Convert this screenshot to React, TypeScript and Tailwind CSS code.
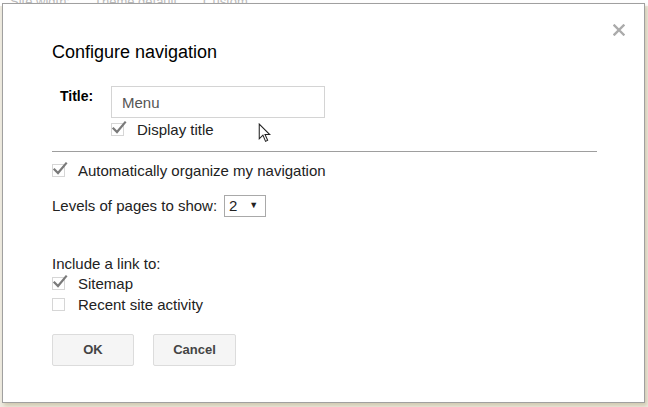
import { useState } from "react";

const Check = ({ checked }: { checked: boolean }) => (
  <span className="relative inline-block w-[13px] h-[13px] border border-[#d6d6d6] bg-white shrink-0">
    {checked && (
      <svg
        viewBox="0 0 16 16"
        className="absolute -left-[1px] -top-[4px] w-[16px] h-[16px]"
      >
        <path
          d="M2.5 8.5 L6 12 L14 2.5"
          fill="none"
          stroke="#7a7a7a"
          strokeWidth="2.2"
          strokeLinecap="square"
        />
      </svg>
    )}
  </span>
);

const CheckRow = ({
  checked,
  label,
  className = "",
}: {
  checked: boolean;
  label: string;
  className?: string;
}) => (
  <label className={`flex items-center gap-[13px] h-[17px] ${className}`}>
    <Check checked={checked} />
    <span className="text-[15px] leading-[17px] text-[#222]">{label}</span>
  </label>
);

export default function App() {
  const [title] = useState("Menu");

  return (
    <div
      className="relative w-[648px] h-[407px] overflow-hidden bg-[#efece2]"
      style={{ fontFamily: '"Liberation Sans", Arial, sans-serif' }}
    >
      {/* faded page behind the dialog */}
      <div className="flex pl-[10px] text-[13px] text-[#bbb] h-[6px] leading-[4px] bg-white">
        <span>Site width:</span>
        <span className="ml-[24px]">Theme default</span>
        <span className="ml-[26px]">Custom</span>
        <span className="ml-[17px]">...</span>
      </div>

      {/* Dialog */}
      <div className="absolute left-[2px] top-[3px] w-[643px] h-[400px] bg-white border border-[#a0a0a0] shadow-[2px_3px_4px_rgba(180,170,130,0.5)]">
        <button className="absolute right-[19px] top-[20px]">
          <svg viewBox="0 0 12 12" className="w-[12px] h-[12px]">
            <path
              d="M1.5 1.5 L10.5 10.5 M10.5 1.5 L1.5 10.5"
              stroke="#ababab"
              strokeWidth="2.4"
              strokeLinecap="square"
            />
          </svg>
        </button>

        {/* mouse pointer */}
        <svg
          viewBox="0 0 12 20"
          className="absolute left-[255px] top-[119px] w-[13px] h-[21px]"
        >
          <path
            d="M1 1 L1 15 L4.5 11.5 L7 17.5 L9 16.5 L6.5 11 L11 11 Z"
            fill="white"
            stroke="#222"
            strokeWidth="1"
          />
        </svg>

        <div className="pl-[49px] pr-[47px] pt-[37px]">
          <h1 className="text-[18px] text-black leading-[22px]">
            Configure navigation
          </h1>

          <div className="flex mt-[23px]">
            <span className="w-[59px] pl-[8px] pt-[2px] text-[14px] leading-[17px] font-bold text-black">
              Title:
            </span>
            <div>
              <input
                defaultValue={title}
                className="block w-[214px] h-[32px] border border-[#d4d4d4] px-[10px] text-[15px] text-[#555] outline-none"
                style={{ fontFamily: '"Liberation Sans", Arial, sans-serif' }}
              />
              <CheckRow checked label="Display title" className="mt-[3px]" />
            </div>
          </div>

          <div className="h-px bg-[#9e9e9e] mt-[13px]" />

          <CheckRow
            checked
            label="Automatically organize my navigation"
            className="mt-[10px]"
          />

          <div className="flex items-center h-[22px] mt-[16px] text-[15px] text-[#222]">
            <span>Levels of pages to show:</span>
            <div className="ml-[7px] w-[42px] h-[22px] border border-[#a9a9a9] flex items-center justify-between pl-[4px] pr-[7px] text-[15px]">
              <span>2</span>
              <span className="text-[9px]">▼</span>
            </div>
          </div>

          <div className="mt-[38px] text-[15px] leading-[17px] text-[#222]">
            Include a link to:
          </div>
          <CheckRow checked label="Sitemap" className="mt-[3px]" />
          <CheckRow checked={false} label="Recent site activity" className="mt-[4px]" />

          <div className="flex gap-[19px] mt-[21px]">
            <button className="w-[82px] h-[32px] border border-[#dcdcdc] bg-[#f5f5f5] rounded-[2px] text-[13px] font-bold text-[#444]">
              OK
            </button>
            <button className="w-[83px] h-[32px] border border-[#dcdcdc] bg-[#f5f5f5] rounded-[2px] text-[13px] font-bold text-[#444]">
              Cancel
            </button>
          </div>
        </div>
      </div>
    </div>
  );
}
